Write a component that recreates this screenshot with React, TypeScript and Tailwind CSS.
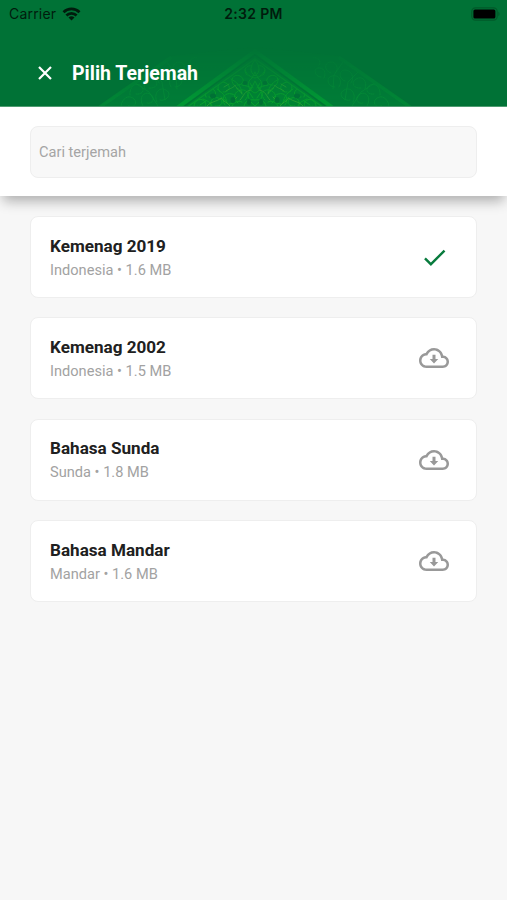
const TRANSLATIONS = [
  { name: "Kemenag 2019", language: "Indonesia", size: "1.6 MB", downloaded: true },
  { name: "Kemenag 2002", language: "Indonesia", size: "1.5 MB", downloaded: false },
  { name: "Bahasa Sunda", language: "Sunda", size: "1.8 MB", downloaded: false },
  { name: "Bahasa Mandar", language: "Mandar", size: "1.6 MB", downloaded: false },
];

function WifiIcon() {
  return (
    <svg className="h-[14px] w-[19px]" viewBox="0 0 19 14" fill="none" stroke="#001c0d" strokeWidth="2.7">
      <path d="M1.5 5.2a11.4 11.4 0 0 1 16 0" />
      <path d="M4.4 8.5a7.2 7.2 0 0 1 10.2 0" />
      <path d="m9.5 13.6-3-3a4.3 4.3 0 0 1 6 0z" fill="#001c0d" stroke="none" />
    </svg>
  );
}

function BatteryIcon() {
  return (
    <svg className="h-[14px] w-[29px]" viewBox="0 0 29 14">
      <rect x="0.8" y="0.8" width="25.4" height="12.4" rx="3.6" fill="none" stroke="#005a2a" strokeWidth="1.2" />
      <rect x="2.4" y="2.4" width="22" height="9.2" rx="1.6" fill="#000" />
      <path d="M27.3 4.8c1.6.6 1.6 3.8 0 4.4z" fill="#005a2a" />
    </svg>
  );
}

function CheckIcon() {
  return (
    <svg className="size-[29px]" viewBox="0 0 24 24" fill="#087b3d">
      <path d="M9 16.17 4.83 12l-1.42 1.41L9 19 21 7l-1.41-1.41z" />
    </svg>
  );
}

function CloudDownloadIcon() {
  return (
    <svg className="size-[30px]" viewBox="0 0 24 24" fill="#999">
      <path d="M19.35 10.04C18.67 6.59 15.64 4 12 4 9.11 4 6.6 5.64 5.35 8.04 2.34 8.36 0 10.91 0 14c0 3.31 2.69 6 6 6h13c2.76 0 5-2.24 5-5 0-2.64-2.05-4.78-4.65-4.96zM19 18H6c-2.21 0-4-1.79-4-4 0-2.05 1.53-3.76 3.56-3.97l1.07-.11.5-.95C8.08 7.14 9.94 6 12 6c2.62 0 4.88 1.86 5.39 4.43l.3 1.5 1.53.11c1.56.1 2.78 1.41 2.78 2.96 0 1.65-1.35 3-3 3z" />
      <path d="M13.2 9.4h-2.4v3.3H8.6l3.4 3.7 3.4-3.7h-2.2z" />
    </svg>
  );
}

// One half of the arabesque, mirrored around x=168
function OrnamentHalf() {
  return (
    <g fill="none" strokeLinecap="round">
      <g clipPath="url(#side-clip)" stroke="#07983a" strokeWidth="0.9" opacity="0.6">
        <path d="M34 67c1-8 8-12 13-7s-2 10-6 6M43 56c-1-8 6-14 11-9s0 9-5 8M56 67c-5-9 1-15 7-12s3 11-3 9M58 50c-3-8 3-14 9-10s2 10-5 9M70 63c-4-8 2-16 9-12s0 12-6 10M72 44c-4-6 0-13 6-13s7 9 0 11M84 48c-4-6 0-13 7-11s4 11-3 11M88 34c-5-4-1-12 5-11s6 9-1 11M99 39c-3-6 1-11 6-10s3 9-3 9M104 26c-3-4 1-9 6-7M48 44l14 9 9 14M64 32l11 11 3 18M80 23l9 13 1 14" />
      </g>
      <path d="m13 68 70-49" stroke="#008d36" strokeWidth="3.5" opacity="0.65" />
      <g clipPath="url(#main-clip)" stroke="#08a42d" strokeWidth="1">
        <path d="M107 67c0-6 8-9 11-4s-4 8-7 4M119 58c-3-6 4-11 8-7s0 9-5 7M124 67c-2-6 4-11 9-7s0 8-5 7M133 53c-5-5 0-12 6-9s3 10-3 9M138 66c-5-7 0-13 7-11s4 10-3 10M147 46c-5-5 0-12 6-9s3 10-3 9M151 64c-6-4-4-12 3-13s9 6 4 10M160 36c-5-5 0-11 5-9M168 67c-8-6-9-14-3-19l3-6M168 54c-6-2-10-10-3-15l3-6M168 37c-6-4-5-10 0-16M157 67c1-5 5-7 11-6M145 67c2-4 6-6 10-4M130 50c5 3 9 7 10 14M144 40c6 3 10 7 11 14M116 60c4 2 8 3 9 7M158 31c2 5 5 7 10 8M155 46c4 1 8 1 10 4M113 66l6-4M134 58l5 4M149 49l5 5M162 53l4 6M163 44l3 5" />
        <path d="M120 67c4-5 10-4 14-8 2 4 7 4 9 8M139 52c4-3 8-3 9-6 1 4 6 4 7 9M153 61c4-4 4-9 11-10M137 48l5-3M150 58l-4 4" strokeWidth="0.7" stroke="#39ae35" />
      </g>
      <g clipPath="url(#main-clip)" fill="#007135">
        <ellipse cx="126" cy="57" rx="3" ry="2.4" />
        <ellipse cx="146" cy="61" rx="2.5" ry="3" />
        <ellipse cx="158" cy="44" rx="2.4" ry="2" />
        <ellipse cx="162" cy="63" rx="2" ry="3" />
      </g>
      <path d="m90 69 78-57" stroke="#009934" strokeWidth="4" />
      <path d="m95 69 73-53" stroke="#007535" strokeWidth="1.1" />
      <path d="m99 69 69-49" stroke="#079a30" strokeWidth="1.2" />
    </g>
  );
}

// Faded arabesque rising from the bottom edge of the header
function HeaderOrnament() {
  return (
    <svg className="absolute bottom-0 left-[87px] h-[67px] w-[336px]" viewBox="0 0 336 67" fill="none">
      <defs>
        <linearGradient id="fade" x1="0" y1="0" x2="0" y2="1">
          <stop offset="0.1" stopColor="#fff" stopOpacity="0" />
          <stop offset="0.45" stopColor="#fff" stopOpacity="0.4" />
          <stop offset="0.95" stopColor="#fff" stopOpacity="0.95" />
        </linearGradient>
        <mask id="ornament-mask" maskUnits="userSpaceOnUse" x="0" y="0" width="336" height="67">
          <rect width="336" height="67" fill="url(#fade)" />
        </mask>
        <clipPath id="side-clip">
          <path d="M17 67 83 20l30-9h35L88 67z" />
        </clipPath>
        <clipPath id="main-clip">
          <path d="m101 67 67-48v48z" />
        </clipPath>
      </defs>
      <g mask="url(#ornament-mask)">
        <path d="m13 67 70-50 85-9 85 9 70 50z" fill="#008737" opacity="0.5" />
        <path d="m94 67 74-53 74 53z" fill="#008534" />
        <OrnamentHalf />
        <g transform="translate(336 0) scale(-1 1)">
          <OrnamentHalf />
        </g>
      </g>
    </svg>
  );
}

function Header() {
  return (
    <header className="relative h-[107px] border-b border-[#4f9d72] bg-[#007236]">
      <HeaderOrnament />
      <div className="relative grid h-[27px] grid-cols-3 items-center pl-[9px] pr-[7px] font-['Inter',sans-serif] text-[#001c0d]">
        <div className="flex items-center gap-[6px]">
          <span className="text-[14px] tracking-[0.2px]">Carrier</span>
          <WifiIcon />
        </div>
        <span className="-ml-0.5 text-center text-[14px] font-semibold tracking-[0.3px]">2:32 PM</span>
        <div className="flex justify-end">
          <BatteryIcon />
        </div>
      </div>
      <div className="relative flex h-[92px] items-center pl-[38px]">
        <button type="button" aria-label="Tutup">
          <svg className="size-[14px]" viewBox="0 0 14 14" stroke="#fff" strokeWidth="2.2">
            <path d="m1 1 12 12M13 1 1 13" />
          </svg>
        </button>
        <h1 className="ml-5 pt-px text-[19.5px] font-bold leading-6 text-white">Pilih Terjemah</h1>
      </div>
    </header>
  );
}

export default function App() {
  return (
    <div className="h-[900px] overflow-hidden bg-[#f7f7f7] font-['Roboto',sans-serif]">
      <Header />
      <div className="relative h-[89px] bg-white px-[30px] pt-[19px] shadow-[0_8px_12px_-3px_rgba(0,0,0,0.3)]">
        <input
          className="h-[52px] w-full rounded-lg border border-[#eeeeee] bg-[#f8f8f8] px-2 text-[14.6px] outline-none placeholder:text-[#a5a5a5] placeholder:opacity-100"
          placeholder="Cari terjemah"
          type="text"
        />
      </div>

      <ul className="space-y-[19.4px] px-[30px] pt-5">
        {TRANSLATIONS.map((item) => (
          <li
            key={item.name}
            className="flex h-[82px] items-center justify-between rounded-lg border border-[#eeeeee] bg-white pl-[19px] pr-[27px]"
          >
            <div className="pt-px">
              <h2 className="text-[17.1px] font-bold leading-6 text-[#202020]">{item.name}</h2>
              <p className="text-[14.6px] leading-6 text-[#a2a2a2]">
                {item.language} • {item.size}
              </p>
            </div>
            {item.downloaded ? <CheckIcon /> : <CloudDownloadIcon />}
          </li>
        ))}
      </ul>
    </div>
  );
}
